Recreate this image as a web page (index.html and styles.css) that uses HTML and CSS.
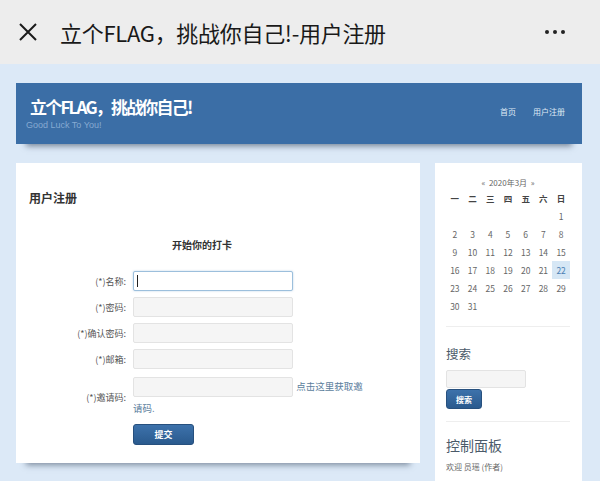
FILE: index.html
```html
<!DOCTYPE html>
<html lang="zh-CN">
<head>
    <meta charset="UTF-8">
    <meta name="viewport" content="width=device-width, initial-scale=1.0">
    <title>立个FLAG，挑战你自己!-用户注册</title>
    <link rel="stylesheet" href="styles.css">
</head>
<body>

<div class="topbar">
    <svg class="close-icon" width="20" height="20" viewBox="0 0 20 20">
        <path d="M2 2 L18 18 M18 2 L2 18" stroke="#1a1a1a" stroke-width="2" fill="none"/>
    </svg>
    <div class="topbar-title">立个FLAG，挑战你自己!-用户注册</div>
    <div class="more"><span></span><span></span><span></span></div>
</div>

<div class="page">
    <header class="site-header">
        <div class="brand">
            <div class="brand-title">立个FLAG，挑战你自己!</div>
            <div class="brand-sub">Good Luck To You!</div>
        </div>
        <nav class="nav">
            <a href="#">首页</a>
            <a href="#">用户注册</a>
        </nav>
    </header>

    <div class="main-row">
        <section class="card main-card">
            <h2 class="card-title">用户注册</h2>
            <table class="reg-table">
                <caption>开始你的打卡</caption>
                <tr>
                    <td class="label">(*)名称:</td>
                    <td class="value"><span class="input-wrap focused"><input type="text" class="field active"></span></td>
                </tr>
                <tr>
                    <td class="label">(*)密码:</td>
                    <td class="value"><input type="password" class="field"></td>
                </tr>
                <tr>
                    <td class="label">(*)确认密码:</td>
                    <td class="value"><input type="password" class="field"></td>
                </tr>
                <tr>
                    <td class="label">(*)邮箱:</td>
                    <td class="value"><input type="text" class="field"></td>
                </tr>
                <tr>
                    <td class="label">(*)邀请码:</td>
                    <td class="value invite"><input type="text" class="field"> <a href="#" class="invite-link">点击这里获取邀请码.</a></td>
                </tr>
                <tr>
                    <td></td>
                    <td class="value"><button class="btn submit">提交</button></td>
                </tr>
            </table>
        </section>

        <aside class="card sidebar">
            <table class="calendar">
                <caption>«&nbsp; 2020年3月 &nbsp;»</caption>
                <thead>
                    <tr><th>一</th><th>二</th><th>三</th><th>四</th><th>五</th><th>六</th><th>日</th></tr>
                </thead>
                <tbody>
                    <tr><td></td><td></td><td></td><td></td><td></td><td></td><td>1</td></tr>
                    <tr><td>2</td><td>3</td><td>4</td><td>5</td><td>6</td><td>7</td><td>8</td></tr>
                    <tr><td>9</td><td>10</td><td>11</td><td>12</td><td>13</td><td>14</td><td>15</td></tr>
                    <tr><td>16</td><td>17</td><td>18</td><td>19</td><td>20</td><td>21</td><td class="today">22</td></tr>
                    <tr><td>23</td><td>24</td><td>25</td><td>26</td><td>27</td><td>28</td><td>29</td></tr>
                    <tr><td>30</td><td>31</td><td></td><td></td><td></td><td></td><td></td></tr>
                </tbody>
            </table>

            <div class="widget">
                <h3 class="widget-title">搜索</h3>
                <input type="text" class="search-field">
                <button class="btn search-btn">搜索</button>
            </div>

            <div class="widget">
                <h3 class="widget-title">控制面板</h3>
                <p class="widget-text">欢迎 员瑶 (作者)</p>
            </div>
        </aside>
    </div>
</div>

</body>
</html>
```

FILE: styles.css
```css
html, body {
    margin: 0;
    padding: 0;
    height: 481px;
    overflow: hidden;
}
body {
    font-family: "Noto Sans CJK SC", "Noto Sans", sans-serif;
    background-color: #dce9f7;
}
.topbar {
    height: 64px;
    background-color: #ededed;
    display: flex;
    align-items: center;
}
.close-icon {
    margin-left: 18px;
    flex: none;
}
.topbar-title {
    margin-left: 22px;
    font-size: 22px;
    color: #191919;
    flex: 1;
    line-height: 30px;
    letter-spacing: -0.3px;
}
.more {
    display: flex;
    gap: 4px;
    margin-right: 35px;
}
.more span {
    width: 4px;
    height: 4px;
    border-radius: 50%;
    background-color: #222;
}
.page {
    padding: 19px 18px 0 16px;
}
.site-header {
    height: 61px;
    background-color: #3b6ea6;
    display: flex;
    align-items: center;
    justify-content: space-between;
    padding: 0 17px 0 14px;
    box-shadow: 0 12px 6px -10px rgba(30, 45, 70, 0.55);
}
.brand-title {
    font-size: 17px;
    font-weight: bold;
    color: #fff;
    line-height: 20px;
    letter-spacing: -1.8px;
}
.brand-sub {
    font-family: "Liberation Sans", Arial, sans-serif;
    font-size: 9px;
    line-height: 12px;
    color: #86aad2;
    margin-top: 2px;
    margin-left: -4px;
}
.nav {
    display: flex;
    gap: 17px;
    margin-top: -4px;
}
.nav a {
    font-size: 8px;
    color: #dfe9f5;
    text-decoration: none;
}
.main-row {
    display: flex;
    gap: 15px;
    margin-top: 19px;
    align-items: flex-start;
}
.card {
    background-color: #fff;
    box-shadow: 0 12px 6px -10px rgba(30, 45, 70, 0.5);
}
.main-card {
    width: 404px;
    height: 300px;
    box-sizing: border-box;
    padding: 26px 13px 0 13px;
}
.card-title {
    margin: 0;
    font-size: 12px;
    line-height: 18px;
    font-weight: bold;
    color: #333;
}
.reg-table {
    margin: 31px 0 0 5px;
    width: 336px;
    border-collapse: collapse;
}
.reg-table caption {
    font-size: 10px;
    font-weight: bold;
    color: #333;
    line-height: 14px;
    padding-bottom: 16px;
}
.reg-table td {
    padding: 3px 0;
}
.reg-table .label {
    width: 92px;
    padding-right: 7px;
    text-align: right;
    font-size: 9px;
    color: #555;
    vertical-align: middle;
}
.reg-table .value {
    font-size: 9.5px;
    line-height: 16px;
}
.reg-table .invite {
    line-height: 22px;
}
.field {
    width: 160px;
    height: 20px;
    box-sizing: border-box;
    border: 1px solid #e3e3e3;
    border-radius: 2px;
    background-color: #f5f5f5;
    vertical-align: middle;
    margin: 0;
    padding: 0 4px;
}
.input-wrap {
    position: relative;
    display: inline-block;
}
.field.active {
    background-color: #fff;
    border-color: #9cbfdc;
    box-shadow: 0 0 2px rgba(110, 160, 210, 0.5);
}
.focused::after {
    content: "";
    position: absolute;
    left: 4px;
    top: 4px;
    width: 1px;
    height: 12px;
    background-color: #222;
}
.invite-link {
    color: #5b7d9c;
    text-decoration: none;
    margin-left: 1px;
}
.btn {
    color: #fff;
    font-family: inherit;
    font-weight: bold;
    border: 1px solid #27507e;
    border-radius: 3px;
    background: linear-gradient(#3d72ab, #2a5a8e);
    cursor: pointer;
    padding: 0;
}
.submit {
    width: 61px;
    height: 21px;
    font-size: 9px;
    margin-top: -1px;
    vertical-align: top;
}
.sidebar {
    width: 147px;
    height: 340px;
    box-sizing: border-box;
    padding: 14px 12px 0 11px;
    flex: none;
}
.calendar {
    width: 124px;
    border-collapse: collapse;
    table-layout: fixed;
    font-size: 8.5px;
}
.calendar caption {
    line-height: 12px;
    color: #666;
    font-size: 8px;
}
.calendar th {
    height: 18px;
    padding: 0;
    color: #444;
    font-weight: bold;
    font-size: 8.5px;
}
.calendar td {
    height: 18px;
    padding: 0;
    text-align: center;
    color: #666;
}
.calendar td.today {
    background-color: #d6e7f5;
    color: #4a80b3;
}
.widget {
    border-top: 1px solid #eee;
    margin-top: 11px;
    padding-top: 18px;
}
.widget + .widget {
    margin-top: 12px;
    padding-top: 13px;
}
.widget-title {
    margin: 0;
    font-size: 12.5px;
    font-weight: normal;
    line-height: 18px;
    color: #4b5a69;
}
.widget + .widget .widget-title {
    font-size: 14px;
    line-height: 20px;
}
.search-field {
    display: block;
    width: 80px;
    height: 18px;
    box-sizing: border-box;
    margin: 7px 0 1px 0;
    border: 1px solid #e3e3e3;
    background-color: #f5f5f5;
    border-radius: 2px;
}
.search-btn {
    display: block;
    width: 36px;
    height: 20px;
    font-size: 8px;
}
.widget-text {
    margin: 6px 0 0 0;
    font-size: 8px;
    line-height: 12px;
    color: #666;
}
```
